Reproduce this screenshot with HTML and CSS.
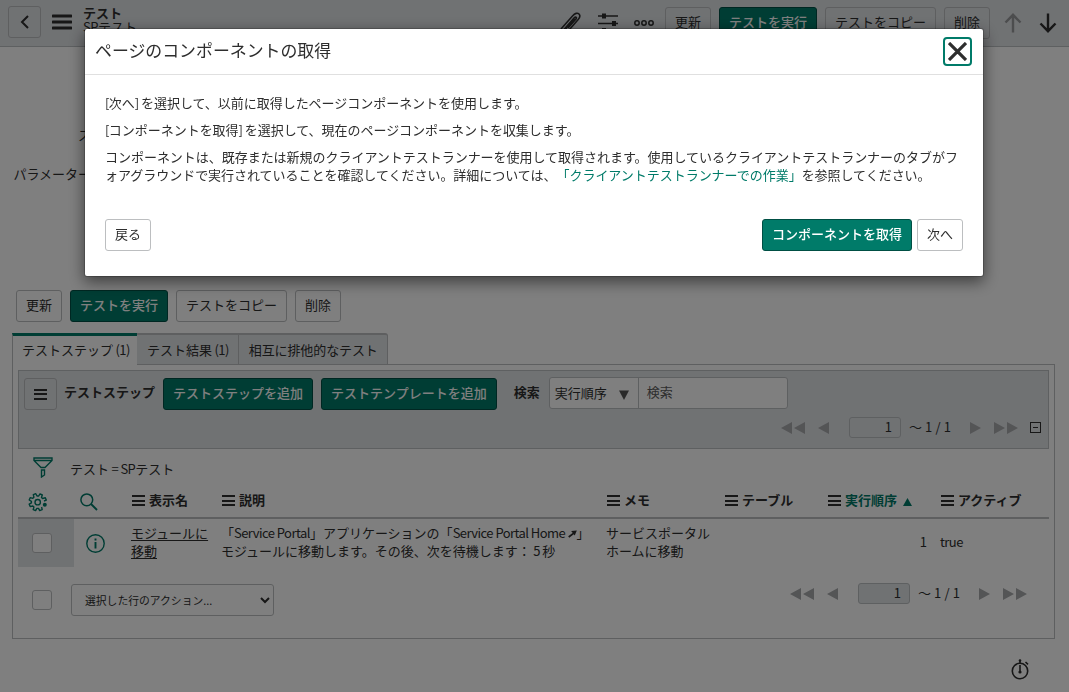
FILE: index.html
```
<!DOCTYPE html>
<html lang="ja">
<head>
    <meta charset="UTF-8">
    <meta name="viewport" content="width=device-width, initial-scale=1.0">
    <title>テスト</title>
    <link rel="stylesheet" href="styles.css">
</head>
<body>
    <header class="navbar">
        <button class="btn btn-back" aria-label="戻る">
            <svg width="10" height="14" viewBox="0 0 10 14"><path d="M8 1L2 7l6 6" fill="none" stroke="currentColor" stroke-width="2"/></svg>
        </button>
        <svg class="nav-menu" width="20" height="16" viewBox="0 0 20 16"><path d="M1 2h18M1 8h18M1 14h18" stroke="currentColor" stroke-width="3" stroke-linecap="round"/></svg>
        <div class="nav-title">
            <strong>テスト</strong>
            <span><span class="lat">SP</span>テスト</span>
        </div>
        <div class="nav-icons">
            <svg width="22" height="22" viewBox="0 0 22 22"><path d="M1 18L12.500 5C15 2.200 17.500 1.500 19 3S20 6.500 18 8.800L9.500 18.500C7.500 20.500 5 18.500 6.800 16.300L14.500 7.500M4 18.500L14 7C15.500 5.500 17.300 6 16 8L8 17" fill="none" stroke="currentColor" stroke-width="1.600"/></svg>
            <svg width="20" height="22" viewBox="0 0 20 22"><path d="M0 5h20M0 12.500h20M0 20h20" stroke="currentColor" stroke-width="1.600"/><path d="M4 2.500h4v5H4zM14 10h4v5h-4zM4 17h4v5H4z" fill="currentColor"/></svg>
            <svg width="20" height="22" viewBox="0 0 20 22"><g fill="none" stroke="currentColor" stroke-width="1.500"><circle cx="3" cy="12" r="2.200"/><circle cx="10" cy="12" r="2.200"/><circle cx="17" cy="12" r="2.200"/></g></svg>
        </div>
        <div class="btn-group">
            <button class="btn">更新</button>
            <button class="btn btn-primary">テストを実行</button>
            <button class="btn">テストをコピー</button>
            <button class="btn">削除</button>
        </div>
        <div class="nav-arrows">
            <svg class="muted" width="18" height="20" viewBox="0 0 18 20"><path d="M9 19.500V2M1.500 9.500L9 1.800l7.500 7.700" fill="none" stroke="currentColor" stroke-width="2.400"/></svg>
            <svg width="18" height="20" viewBox="0 0 18 20"><path d="M9 .5V18M1.500 10.500L9 18.200l7.500-7.700" fill="none" stroke="currentColor" stroke-width="2.400"/></svg>
        </div>
    </header>

    <section class="form">
        <label class="form-label">ス</label>
        <label class="form-label">パラメーター</label>
    </section>

    <main class="content">
        <div class="btn-group form-buttons">
            <button class="btn">更新</button>
            <button class="btn btn-primary">テストを実行</button>
            <button class="btn">テストをコピー</button>
            <button class="btn">削除</button>
        </div>

        <nav class="tabs">
            <a class="tab active">テストステップ<span class="lat"> (1)</span></a>
            <a class="tab">テスト結果<span class="lat"> (1)</span></a>
            <a class="tab">相互に排他的なテスト</a>
        </nav>

        <div class="panel">
            <div class="list-nav">
                <div class="list-tools">
                    <button class="btn btn-menu" aria-label="メニュー"><i class="bars"></i></button>
                    <strong class="list-title">テストステップ</strong>
                    <div class="btn-group">
                        <button class="btn btn-primary">テストステップを追加</button>
                        <button class="btn btn-primary">テストテンプレートを追加</button>
                    </div>
                    <strong class="search-label">検索</strong>
                    <div class="search">
                        <div class="search-field">実行順序<svg width="10" height="10" viewBox="0 0 10 10"><path d="M0 .5h10L5 10z" fill="currentColor"/></svg></div>
                        <div class="search-text">検索</div>
                    </div>
                </div>
                <div class="pager">
                    <svg width="24" height="12" viewBox="0 0 24 12"><path d="M11 0v12L0 6zM24 0v12L13 6z" fill="currentColor"/></svg>
                    <svg width="11" height="12" viewBox="0 0 11 12"><path d="M11 0v12L0 6z" fill="currentColor"/></svg>
                    <span class="page-no">1</span>
                    <span class="page-total">～ 1 / 1</span>
                    <svg width="11" height="12" viewBox="0 0 11 12"><path d="M0 0v12l11-6z" fill="currentColor"/></svg>
                    <svg width="24" height="12" viewBox="0 0 24 12"><path d="M0 0v12l11-6zM13 0v12l11-6z" fill="currentColor"/></svg>
                    <i class="collapse"></i>
                </div>
            </div>

            <div class="filter">
                <svg width="20" height="21" viewBox="0 0 20 21"><path d="M1 1h18v2.500L12 10.500H8L1 3.500zM1 3.500h18M8.500 13h3v5l-3 2z" fill="none" stroke="currentColor" stroke-width="1.400"/></svg>
                <span>テスト<span class="lat"> = SP</span>テスト</span>
            </div>

            <table class="list">
                <colgroup>
                    <col class="c-check"><col class="c-info"><col class="c-name"><col class="c-desc">
                    <col class="c-memo"><col class="c-table"><col class="c-order"><col class="c-active">
                </colgroup>
                <thead>
                    <tr>
                        <th class="icon-cell gear"><svg width="20" height="20" viewBox="0 0 20 20"><path d="M16 9L18.300 8.100 17.300 5.800 14.600 6.500 13.500 5.400 14.300 3 12 1.900 10.700 4 9 4 7.800 1.700 5.300 2.700 5.900 5.200 4.800 6.300 2.300 5.600 1.200 8 3.400 9.300 3.400 10.900 1.200 12.200 2.200 14.600 4.800 14 5.900 15.100 5.200 17.600 7.600 18.600 8.900 16.400 10.500 16.400 11.700 18.600 14.200 17.600 13.600 15" fill="none" stroke="currentColor" stroke-width="1.400" stroke-linejoin="round"/><circle cx="9.700" cy="10.200" r="2.700" fill="none" stroke="currentColor" stroke-width="1.400"/><circle cx="16.800" cy="12.800" r="2" fill="currentColor"/></svg></th>
                        <th class="icon-cell glass"><svg width="18" height="18" viewBox="0 0 18 18"><circle cx="6.800" cy="6.800" r="5.900" fill="none" stroke="currentColor" stroke-width="1.500"/><path d="M11 11l6 6" stroke="currentColor" stroke-width="1.900"/></svg></th>
                        <th><i class="bars"></i>表示名</th>
                        <th><i class="bars"></i>説明</th>
                        <th><i class="bars"></i>メモ</th>
                        <th><i class="bars"></i>テーブル</th>
                        <th><i class="bars"></i><span class="sorted">実行順序<svg width="9" height="8" viewBox="0 0 9 8"><path d="M0 8h9L4.500 0z" fill="currentColor"/></svg></span></th>
                        <th><i class="bars"></i>アクティブ</th>
                    </tr>
                </thead>
                <tbody>
                    <tr>
                        <td class="check-cell"><span class="checkbox"></span></td>
                        <td class="icon-cell info"><svg width="19" height="19" viewBox="0 0 19 19"><circle cx="9.500" cy="9.500" r="8.700" fill="none" stroke="currentColor" stroke-width="1.400"/><path d="M9.500 8v6.500M9.500 4.500v2" stroke="currentColor" stroke-width="1.900"/></svg></td>
                        <td><a class="row-link">モジュールに<br>移動</a></td>
                        <td>「<span class="lat">Service Portal</span>」アプリケーションの「<span class="lat">Service Portal Home </span><svg class="ne" width="9" height="8" viewBox="0 0 10 8"><path d="M.8 7.300L6.500 3" stroke="currentColor" stroke-width="2"/><path d="M3.500 .8L9.800 0 7.500 5.800z" fill="currentColor"/></svg>」<br>モジュールに移動します。その後、次を待機します：<span class="lat"> 5 </span>秒</td>
                        <td>サービスポータル<br>ホームに移動</td>
                        <td></td>
                        <td class="num">1</td>
                        <td><span class="lat">true</span></td>
                    </tr>
                </tbody>
            </table>

            <div class="list-footer">
                <span class="checkbox"></span>
                <div class="action-select">選択した行のアクション...<svg width="10" height="7" viewBox="0 0 10 7"><path d="M1 1l4 4 4-4" fill="none" stroke="currentColor" stroke-width="2"/></svg></div>
                <div class="pager">
                    <svg width="24" height="12" viewBox="0 0 24 12"><path d="M11 0v12L0 6zM24 0v12L13 6z" fill="currentColor"/></svg>
                    <svg width="11" height="12" viewBox="0 0 11 12"><path d="M11 0v12L0 6z" fill="currentColor"/></svg>
                    <span class="page-no">1</span>
                    <span class="page-total">～ 1 / 1</span>
                    <svg width="11" height="12" viewBox="0 0 11 12"><path d="M0 0v12l11-6z" fill="currentColor"/></svg>
                    <svg width="24" height="12" viewBox="0 0 24 12"><path d="M0 0v12l11-6zM13 0v12l11-6z" fill="currentColor"/></svg>
                </div>
            </div>
        </div>

        <div class="timing">
            <svg width="19" height="21" viewBox="0 0 19 21"><circle cx="9" cy="12" r="7.700" fill="none" stroke="currentColor" stroke-width="1.600"/><path d="M9 6v7M9 1v3M14.500 3l2.500 2.300" stroke="currentColor" stroke-width="1.600"/><circle cx="9" cy="13" r="1.600" fill="currentColor"/><circle cx="9" cy="1.500" r="1.300" fill="currentColor"/></svg>
        </div>
    </main>

    <div class="backdrop">
        <div class="modal" role="dialog">
            <div class="modal-header">
                <h1>ページのコンポーネントの取得</h1>
                <button class="close" aria-label="閉じる"><svg width="19" height="19" viewBox="0 0 19 19"><path d="M1 1l17 17M18 1L1 18" stroke="currentColor" stroke-width="3.200"/></svg></button>
            </div>
            <div class="modal-body">
                <p><span class="lat">[</span>次へ<span class="lat">] </span>を選択して、以前に取得したページコンポーネントを使用します。</p>
                <p><span class="lat">[</span>コンポーネントを取得<span class="lat">] </span>を選択して、現在のページコンポーネントを収集します。</p>
                <p>コンポーネントは、既存または新規のクライアントテストランナーを使用して取得されます。使用しているクライアントテストランナーのタブがフ<br>ォアグラウンドで実行されていることを確認してください。詳細については、<a class="doc-link">「クライアントテストランナーでの作業」</a>を参照してください。</p>
            </div>
            <div class="modal-footer">
                <button class="btn">戻る</button>
                <button class="btn btn-primary push">コンポーネントを取得</button>
                <button class="btn">次へ</button>
            </div>
        </div>
    </div>
</body>
</html>
```

FILE: styles.css
```
* {
    box-sizing: border-box;
}
body {
    margin: 0;
    height: 692px;
    overflow: hidden;
    font-family: "Noto Sans CJK JP", "Noto Sans", sans-serif;
    font-size: 13px;
    line-height: 18px;
    color: #2e2e2e;
    background-color: #fff;
    white-space: nowrap;
    text-spacing-trim: space-all;
}
svg {
    display: block;
    flex: none;
}
/* latin runs are set tighter than the kana */
.lat {
    letter-spacing: -0.55px;
}

/* buttons */
.btn {
    height: 32px;
    padding: 0 9px 2px;
    border: 1px solid #bcbec0;
    border-radius: 3px;
    background-color: #fff;
    color: #2e2e2e;
    font: inherit;
    white-space: nowrap;
}
.btn-primary {
    background-color: #007b69;
    border-color: #004f44;
    color: #fff;
    font-weight: 500;
}
.btn-group {
    display: flex;
    gap: 8px;
}

/* top bar */
.navbar {
    display: flex;
    align-items: flex-start;
    height: 47px;
    padding: 7px 12px 0 8px;
    background-color: #e1e4e7;
    border-bottom: 1px solid #bcc0c3;
}
.btn-back {
    display: flex;
    align-items: center;
    justify-content: center;
    width: 33px;
    padding: 0;
    margin-top: -1px;
}
.nav-menu {
    margin: 7px 11px 0;
}
.nav-title {
    display: flex;
    flex-direction: column;
    margin-top: -1px;
    line-height: 14px;
}
.nav-title strong {
    font-weight: 700;
}
.nav-icons {
    display: flex;
    gap: 16px;
    margin-left: auto;
    margin-top: 4px;
    margin-right: 11px;
}
.nav-arrows {
    display: flex;
    gap: 17px;
    margin: 6px 0 0 14px;
}
.navbar .btn:not(.btn-primary),
.btn.btn-menu {
    background-color: transparent;
}
.muted {
    color: #989a9c;
}

/* form labels */
.form {
    display: flex;
    flex-direction: column;
    gap: 21px;
    width: 91px;
    height: 243px;
    padding-top: 79px;
    text-align: right;
}

.content {
    padding: 0 14px 0 12px;
}
.form-buttons {
    padding: 0 4px;
}

/* tabs */
.tabs {
    display: flex;
    margin-top: 11px;
    margin-bottom: -1px;
}
.tab {
    height: 32px;
    padding: 6px 9px 0;
    border: 1px solid #bcbec0;
    border-top-width: 2px;
    border-left-width: 0;
    background-color: #e1e4e7;
}
.tab:last-child {
    border-top-right-radius: 3px;
    letter-spacing: -0.1px;
}
.tab.active {
    position: relative;
    width: 125px;
    padding-top: 5px;
    border-top: 3px solid #007b69;
    border-left-width: 1px;
    border-right-width: 0;
    border-bottom: 0;
    background-color: #fff;
}
.tab + .tab {
    padding-left: 10px;
}

.panel {
    height: 275px;
    padding: 5px;
    border: 1px solid #bcbec0;
}

/* list toolbar */
.list-nav {
    height: 79px;
    padding: 7px 7px 0 5px;
    border: 1px solid #bcc0c3;
    background-color: #e1e4e7;
}
.list-tools {
    display: flex;
    align-items: center;
}
.btn-menu {
    width: 33px;
    padding: 0 0 0 9px;
}
.bars {
    display: block;
    width: 13px;
    height: 11px;
    border-top: 2px solid #2e2e2e;
    border-bottom: 2px solid #2e2e2e;
    background: linear-gradient(#2e2e2e, #2e2e2e) center / 13px 2px no-repeat;
}
.list-title {
    margin: 0 8px 4px 7px;
}
.search-label {
    margin: 0 9px 4px 17px;
}
.search {
    display: flex;
    width: 239px;
    height: 32px;
    margin-top: -2px;
    border: 1px solid #bcc0c3;
    border-radius: 3px;
    background-color: #fff;
    line-height: 28px;
}
.search-field {
    display: flex;
    align-items: center;
    justify-content: space-between;
    width: 89px;
    padding: 0 9px 0 5px;
    border-right: 1px solid #bcc0c3;
}
.search-field svg {
    margin-top: 3px;
    color: #555;
}
.search-text {
    padding-left: 8px;
    color: #5c5c5c;
}

.pager {
    display: flex;
    align-items: center;
    justify-content: flex-end;
    margin-top: 7px;
    color: #a8aaac;
}
.pager svg:nth-of-type(2),
.pager svg:nth-of-type(4) {
    margin-left: 13px;
}
.page-no {
    width: 52px;
    height: 21px;
    margin-left: 20px;
    padding-right: 8px;
    border: 1px solid #bcc0c3;
    border-radius: 3px;
    background-color: #e1e4e7;
    color: #2e2e2e;
    text-align: right;
}
.page-total {
    width: 41px;
    margin: -1px 20px 0 8px;
    color: #2e2e2e;
    letter-spacing: -0.3px;
    word-spacing: 0.8px;
}
.collapse {
    width: 11px;
    height: 11px;
    margin-left: 12px;
    border: 1px solid #2e2e2e;
    background: linear-gradient(#2e2e2e, #2e2e2e) center / 5px 1px no-repeat;
}

.filter {
    display: flex;
    align-items: center;
    gap: 17px;
    height: 37px;
    padding-left: 15px;
}
.filter svg {
    color: #007b69;
}
.filter > span {
    margin-top: 3px;
}

/* list */
.list {
    width: 1031px;
    table-layout: fixed;
    border-collapse: separate;
    border-spacing: 0;
}
.c-check { width: 56px; }
.c-info { width: 50px; }
.c-name { width: 90px; }
.c-desc { width: 385px; }
.c-memo { width: 118px; }
.c-table { width: 103px; }
.c-order { width: 113px; }
.c-active { width: 116px; }
.list th {
    height: 33px;
    padding: 0 0 3px 7px;
    border-bottom: 2px solid #bcbec0;
    text-align: left;
}
.list th .bars {
    display: inline-block;
    margin: 0 4px 0 1px;
    vertical-align: -1px;
}
.list td {
    height: 48px;
    padding: 0 0 2px 7px;
}
.list .icon-cell {
    padding: 0 0 0 6px;
    color: #007b69;
}
.list .gear {
    padding-left: 10px;
}
.list .info {
    padding: 1px 0 0 12px;
}
.sorted {
    color: #007b69;
}
.sorted svg {
    display: inline-block;
    margin-left: 6px;
    vertical-align: -1px;
}
.list .check-cell {
    padding: 0 0 0 14px;
    background-color: #e1e4e7;
}
.checkbox {
    display: block;
    width: 20px;
    height: 20px;
    border: 1px solid #bcbec0;
    border-radius: 3px;
    background-color: #fff;
}
.row-link {
    text-decoration: underline;
    text-underline-offset: 2px;
}
.ne {
    display: inline-block;
}
.list .num {
    padding-right: 6px;
    text-align: right;
}

.list-footer {
    display: flex;
    align-items: center;
    height: 32px;
    margin-top: 17px;
    padding: 0 22px 0 14px;
}
.action-select {
    display: flex;
    align-items: center;
    justify-content: space-between;
    width: 203px;
    height: 32px;
    margin-left: 19px;
    padding: 0 3px 0 13px;
    border: 1px solid #bcbec0;
    border-radius: 3px;
    font-size: 10.8px;
}
.list-footer .pager {
    margin: -13px 0 0 auto;
}

.timing {
    display: flex;
    justify-content: flex-end;
    padding: 20px 25px 0 0;
}

/* dialog */
.backdrop {
    position: fixed;
    inset: 0;
    padding: 28px 0 0 84px;
    background-color: rgba(0, 0, 0, 0.5);
}
.modal {
    width: 900px;
    height: 249px;
    border: 1px solid rgba(0, 0, 0, 0.2);
    border-radius: 3px;
    background-color: #fff;
    background-clip: padding-box;
    box-shadow: 0 5px 15px rgba(0, 0, 0, 0.5);
}
.modal-header {
    display: flex;
    align-items: center;
    justify-content: space-between;
    height: 46px;
    padding: 0 11px 0 10px;
    border-bottom: 1px solid #e0e0e0;
}
.modal-header h1 {
    margin: 0 0 3px;
    font-size: 16.9px;
    font-weight: 400;
}
.close {
    display: flex;
    align-items: center;
    justify-content: center;
    width: 29px;
    height: 29px;
    padding: 0;
    border: 2px solid #007b69;
    border-radius: 4px;
    background-color: #fff;
    color: #2e2e2e;
}
.modal-body {
    padding: 19px 20px 0;
    letter-spacing: -0.03px;
}
.modal-body p {
    margin: 0 0 9px;
}
.doc-link {
    color: #007b69;
}
.modal-footer {
    display: flex;
    gap: 5px;
    padding: 26px 20px 0;
}
.push {
    margin-left: auto;
}
```
